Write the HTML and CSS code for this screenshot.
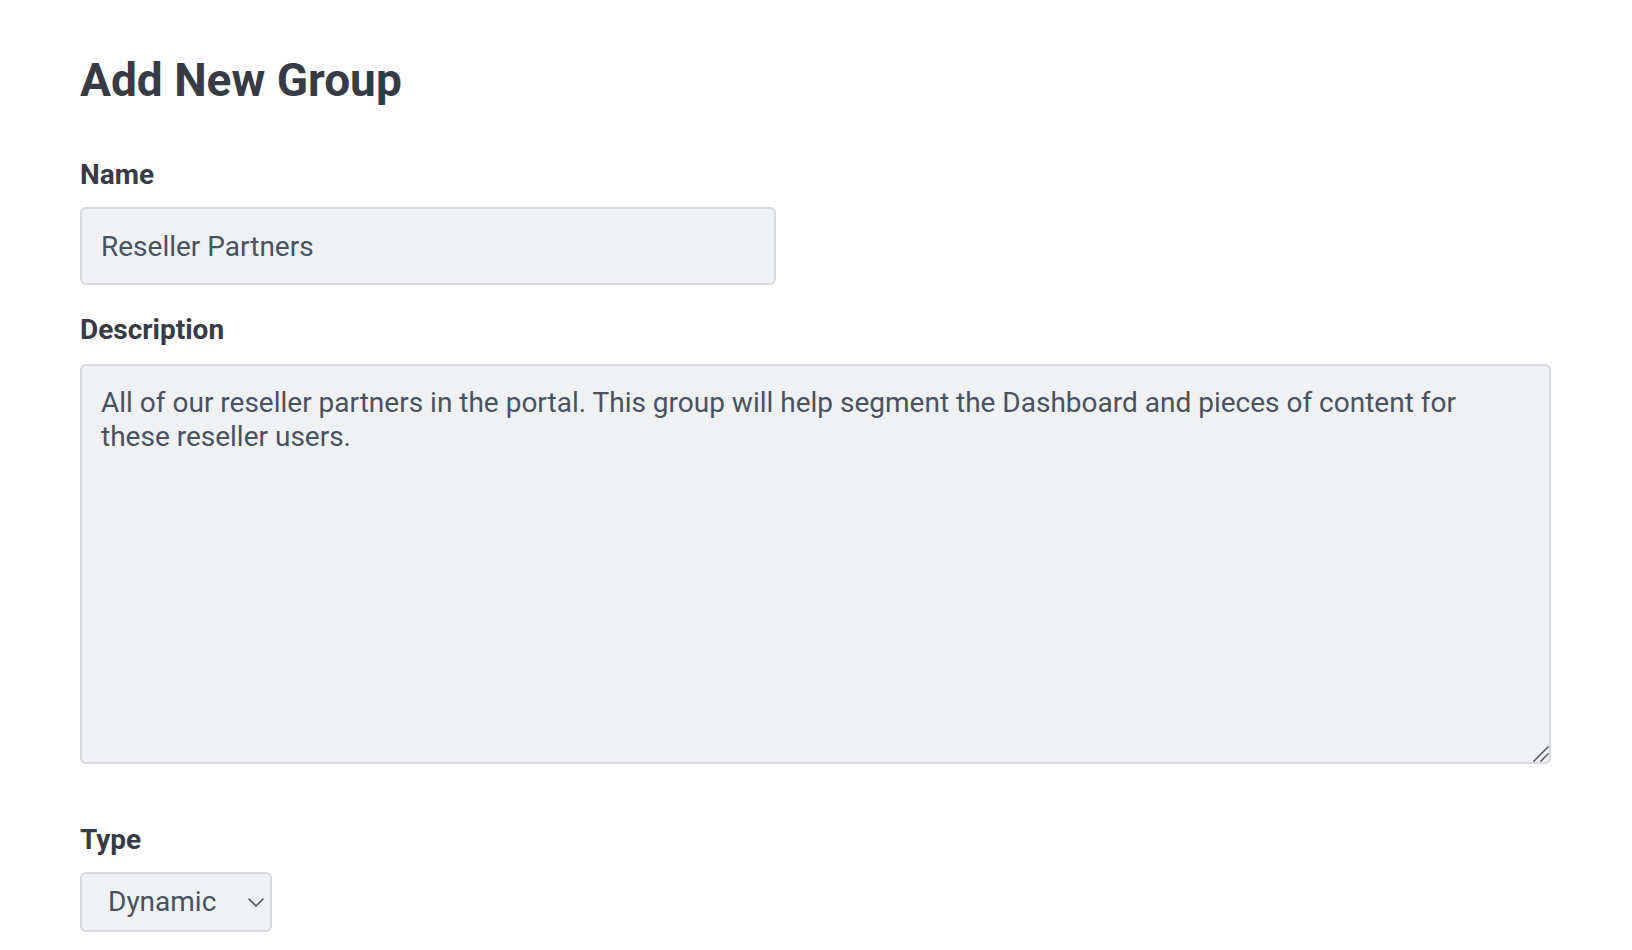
FILE: index.html
```html
<!DOCTYPE html>
<html lang="en">
<head>
<meta charset="utf-8">
<title>Add New Group</title>
<link rel="stylesheet" href="styles.css">
</head>
<body>
<main class="page">
  <h1 class="title">Add New Group</h1>
  <form class="form">
    <div class="field">
      <label class="label" for="group-name">Name</label>
      <input class="input" id="group-name" type="text" value="Reseller Partners">
    </div>
    <div class="field field-desc">
      <label class="label label-desc" for="group-desc">Description</label>
      <div class="textarea-wrap">
        <textarea class="textarea" id="group-desc">All of our reseller partners in the portal. This group will help segment the Dashboard and pieces of content for these reseller users.</textarea>
        <svg class="resizer" width="16" height="16" viewBox="0 0 16 16" aria-hidden="true"><path d="M0.8 15.2 L15.2 0.8 M7.8 15.2 L15.2 7.8" fill="none" stroke="#555a61" stroke-width="1.5" stroke-linecap="round"/></svg>
      </div>
    </div>
    <div class="field field-type">
      <label class="label" for="group-type">Type</label>
      <div class="select-wrap">
        <select class="select" id="group-type">
          <option>Dynamic</option>
          <option>Static</option>
        </select>
        <svg class="chevron" width="16" height="9" viewBox="0 0 16 9" aria-hidden="true"><path d="M1 1 L8 8 L15 1" fill="none" stroke="#4a5261" stroke-width="1.6" stroke-linecap="round" stroke-linejoin="round"/></svg>
      </div>
    </div>
  </form>
</main>
</body>
</html>
```

FILE: styles.css
```css
* {
  box-sizing: border-box;
}

html, body {
  margin: 0;
  background: #ffffff;
}

body {
  font-family: Roboto, "Liberation Sans", sans-serif;
  color: #363b45;
}

.page {
  padding: 52px 81px 0 80px;
}

.title {
  margin: 0 0 50px;
  font-size: 46px;
  line-height: 56px;
  font-weight: 700;
  color: #363b45;
}

.form {
  display: flex;
  flex-direction: column;
}

.field {
  display: flex;
  flex-direction: column;
  align-items: flex-start;
}

.field-desc {
  margin-top: 28px;
  align-items: stretch;
}

.field-type {
  margin-top: 59px;
}

.label {
  font-size: 28px;
  line-height: 34px;
  font-weight: 700;
  color: #363b45;
  margin-bottom: 15px;
}

.label-desc {
  margin-bottom: 17px;
}

.input,
.textarea,
.select {
  font-family: Roboto, "Liberation Sans", sans-serif;
  font-size: 28px;
  line-height: 34px;
  font-weight: 400;
  color: #4a5261;
  background: #f0f1f3;
  border: 2px solid #d6d9de;
  border-radius: 6px;
  outline: none;
}

.input {
  width: 696px;
  height: 78px;
  padding: 0 19px;
}

.textarea-wrap {
  position: relative;
}

.textarea {
  width: 100%;
  height: 400px;
  padding: 20px 19px;
  resize: none;
  display: block;
}

.resizer {
  position: absolute;
  right: 2px;
  bottom: 2px;
  pointer-events: none;
}

.select-wrap {
  position: relative;
  display: inline-block;
}

.select {
  -webkit-appearance: none;
  appearance: none;
  width: 192px;
  height: 60px;
  padding: 0 0 0 26px;
  cursor: pointer;
}

.chevron {
  position: absolute;
  left: 168px;
  top: 26px;
  pointer-events: none;
}
```
